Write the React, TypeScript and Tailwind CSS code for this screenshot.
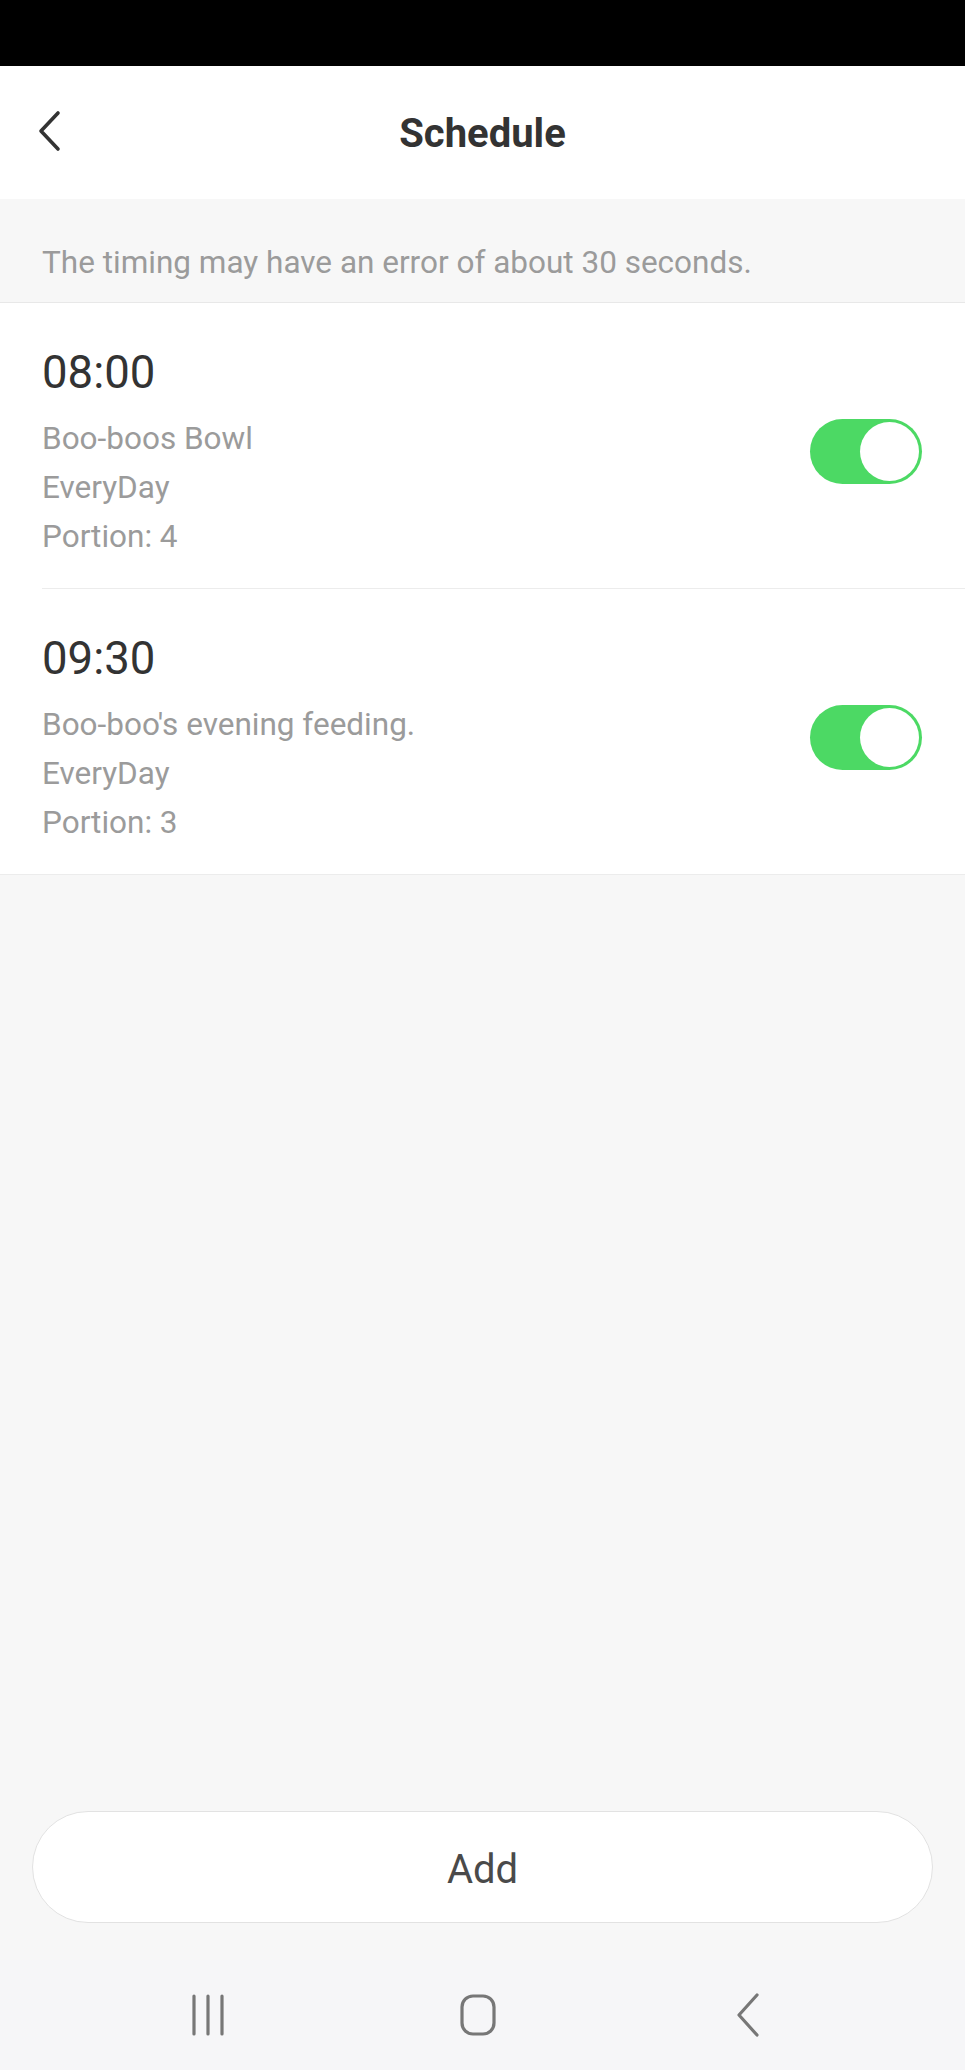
import React from 'react';

type Plan = {
  time: string;
  name: string;
  repeat: string;
  portion: number;
  on: boolean;
};

const plans: Plan[] = [
  { time: '08:00', name: 'Boo-boos Bowl', repeat: 'EveryDay', portion: 4, on: true },
  { time: '09:30', name: "Boo-boo's evening feeding.", repeat: 'EveryDay', portion: 3, on: true },
];

const Toggle = ({ on }: { on: boolean }) => (
  <div
    className={`flex h-[65px] w-[112px] items-center rounded-full px-[3px] ${
      on ? 'justify-end bg-[#4cd964]' : 'justify-start bg-[#e5e5e5]'
    }`}
  >
    <div className="h-[59px] w-[59px] rounded-full bg-white" />
  </div>
);

const PlanRow = ({ plan, first }: { plan: Plan; first: boolean }) => (
  <div className={first ? '' : 'ml-[42px] border-t border-[#ececec]'}>
    <div className={`flex items-center pr-[43px] ${first ? 'pl-[42px]' : ''}`}>
      <div className="flex-1 pt-[44px] pb-[27px]">
        <div className="text-[45.5px] leading-[52px] text-[#333333]">{plan.time}</div>
        <div className="mt-[15px] text-[31.5px] leading-[49px] text-[#9b9b9b]">
          <div>{plan.name}</div>
          <div>{plan.repeat}</div>
          <div>Portion: {plan.portion}</div>
        </div>
      </div>
      <div className="mt-[12px]">
        <Toggle on={plan.on} />
      </div>
    </div>
  </div>
);

const App = () => (
  <div
    className="flex h-[2070px] w-full flex-col bg-[#f7f7f7]"
    style={{ fontFamily: 'Roboto, "Noto Sans", sans-serif' }}
  >
    <div className="h-[66px] bg-black" />

    <div className="relative flex h-[133px] items-center justify-center bg-white pt-[3px]">
      <button className="absolute left-[30px] top-[38px] p-[6px]">
        <svg width="26" height="42" viewBox="0 0 26 42" fill="none">
          <polyline
            points="22,3 5,21 22,39"
            stroke="#333333"
            strokeWidth="3.6"
            strokeLinecap="round"
            strokeLinejoin="round"
          />
        </svg>
      </button>
      <h1 className="text-[40px] font-bold leading-none text-[#333333]">Schedule</h1>
    </div>

    <div className="h-[104px] border-b border-[#e8e8e8] pl-[42px] pt-[44px]">
      <p className="text-[31.5px] leading-[40px] text-[#9b9b9b]">
        The timing may have an error of about 30 seconds.
      </p>
    </div>

    <div className="border-b border-[#ececec] bg-white">
      {plans.map((p, i) => (
        <PlanRow key={p.time} plan={p} first={i === 0} />
      ))}
    </div>

    <div className="flex-1" />

    <div className="px-[32px] pb-[37px]">
      <button className="flex h-[112px] w-full items-center justify-center rounded-full border border-[#e2e2e2] bg-white pt-[5px] text-[40px] text-[#4a4a4a]">
        Add
      </button>
    </div>

    <div className="flex h-[110px] items-center justify-center bg-[#f6f6f8] pr-[9px]">
      <div className="flex w-[270px] justify-center">
        <svg width="36" height="42" viewBox="0 0 36 42" fill="none">
          <line x1="4" y1="2" x2="4" y2="40" stroke="#777777" strokeWidth="3.2" strokeLinecap="round" />
          <line x1="18" y1="2" x2="18" y2="40" stroke="#777777" strokeWidth="3.2" strokeLinecap="round" />
          <line x1="32" y1="2" x2="32" y2="40" stroke="#777777" strokeWidth="3.2" strokeLinecap="round" />
        </svg>
      </div>
      <div className="flex w-[270px] justify-center">
        <svg width="36" height="42" viewBox="0 0 36 42" fill="none">
          <rect x="2" y="2" width="32" height="38" rx="11" stroke="#777777" strokeWidth="3.2" />
        </svg>
      </div>
      <div className="flex w-[270px] justify-center">
        <svg width="24" height="44" viewBox="0 0 24 44" fill="none">
          <polyline
            points="21,2 3,22 21,42"
            stroke="#777777"
            strokeWidth="3.2"
            strokeLinecap="round"
            strokeLinejoin="round"
          />
        </svg>
      </div>
    </div>
  </div>
);

export default App;
